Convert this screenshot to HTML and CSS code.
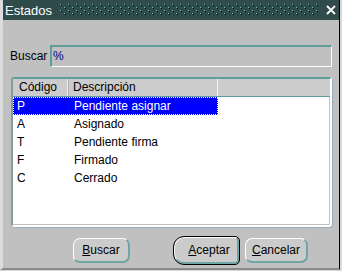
FILE: index.html
```html
<!DOCTYPE html>
<html lang="es">

<head>
    <meta charset="UTF-8">
    <title>Estados</title>
    <link rel="stylesheet" href="styles.css">
</head>

<body>
    <div class="window">
        <div class="titlebar">
            <span class="title">Estados</span>
            <svg class="grip" width="258" height="12">
                <defs>
                    <pattern id="dots" width="8" height="6" patternUnits="userSpaceOnUse">
                        <rect x="0" y="0" width="1" height="1" fill="#6fc1c1"/>
                        <rect x="1" y="1" width="1" height="1" fill="#000"/>
                        <rect x="4" y="3" width="1" height="1" fill="#6fc1c1"/>
                        <rect x="5" y="4" width="1" height="1" fill="#000"/>
                    </pattern>
                </defs>
                <rect width="258" height="12" fill="url(#dots)"/>
            </svg>
            <svg class="close" width="10" height="10" viewBox="0 0 10 10">
                <path d="M1 1 L9 9 M9 1 L1 9" stroke="#fff" stroke-width="1.8"/>
            </svg>
        </div>

        <div class="content">
            <div class="search">
                <label>Buscar</label>
                <div class="field">%</div>
            </div>

            <div class="list">
                <div class="row head">
                    <div class="col code">Código</div>
                    <div class="col desc">Descripción</div>
                </div>
                <div class="row selected">
                    <div class="col code">P</div>
                    <div class="col desc">Pendiente asignar</div>
                </div>
                <div class="row">
                    <div class="col code">A</div>
                    <div class="col desc">Asignado</div>
                </div>
                <div class="row">
                    <div class="col code">T</div>
                    <div class="col desc">Pendiente firma</div>
                </div>
                <div class="row">
                    <div class="col code">F</div>
                    <div class="col desc">Firmado</div>
                </div>
                <div class="row">
                    <div class="col code">C</div>
                    <div class="col desc">Cerrado</div>
                </div>
            </div>

            <div class="buttons">
                <button class="btn btn-find"><u>B</u>uscar</button>
                <button class="btn btn-ok"><u>A</u>ceptar</button>
                <button class="btn btn-cancel"><u>C</u>ancelar</button>
            </div>
        </div>
    </div>
</body>

</html>
```

FILE: styles.css
```css
body {
    margin: 0;
    background: #d8d8d8;
    font-family: "Liberation Sans", Arial, sans-serif;
    font-size: 12px;
}

.window {
    width: 340px;
    height: 270px;
    box-sizing: border-box;
    background: #c0c0c0;
    border-left: 3px solid #dcdcdc;
    border-right: 1px solid #000;
    border-bottom: 2px solid #8a8a8a;
}

.titlebar {
    height: 20px;
    background: #2f4b4b;
    display: flex;
    align-items: center;
    color: #fff;
}

.title {
    font-size: 13px;
    padding-left: 2px;
    width: 55px;
}

.grip {
    display: block;
}

.close {
    display: block;
    margin-left: 8px;
}

.content {
    padding: 25px 7px 0 7px;
}

.search {
    display: flex;
    align-items: center;
}

.search label {
    width: 40px;
}

.field {
    flex: 1;
    height: 22px;
    box-sizing: border-box;
    border-top: 2px solid #5f9e9e;
    border-left: 2px solid #5f9e9e;
    border-right: 1px solid #fff;
    border-bottom: 1px solid #fff;
    color: #000080;
    padding-left: 1px;
    line-height: 18px;
}

.list {
    margin: 10px 0 0 1px;
    height: 150px;
    box-sizing: border-box;
    background: #fff;
    border-top: 2px solid #5f9e9e;
    border-left: 2px solid #7fa0a0;
    border-right: 2px solid #fff;
    border-bottom: 2px solid #fff;
    border-radius: 3px;
    box-shadow: 1px 1px 0 #9ab, inset -1px -1px 0 #c0c0c0;
}

.row {
    display: flex;
    height: 18px;
    line-height: 18px;
}

.col {
    box-sizing: border-box;
    white-space: nowrap;
}

.code {
    width: 55px;
    padding-left: 4px;
}

.desc {
    width: 150px;
    padding-left: 6px;
}

.row.head {
    background: #cccccc;
    border-bottom: 1px solid #5f9e9e;
    height: 17px;
    line-height: 17px;
}

.head .code {
    padding-left: 6px;
    border-right: 1px solid #f0f0f0;
}

.head .desc {
    padding-left: 5px;
    border-right: 1px solid #f0f0f0;
    box-shadow: inset 1px 0 0 #b0b0b0;
}

.row.selected {
    width: 205px;
    background: #0000ff;
    color: #fff;
    outline: 1px dotted #fff;
    outline-offset: -1px;
}

.buttons {
    display: flex;
    align-items: center;
    margin-top: 10px;
    padding-left: 63px;
}

.btn {
    font-family: "Liberation Sans", Arial, sans-serif;
    font-size: 12px;
    height: 25px;
    background: #cbcbcb;
    color: #000;
    border-top: 1px solid #fff;
    border-left: 1px solid #fff;
    border-right: 2px solid #6fa5a5;
    border-bottom: 2px solid #6fa5a5;
    border-radius: 7px;
    padding: 0;
    margin: 0;
}

.btn-find {
    width: 57px;
}

.btn-ok {
    width: 65px;
    height: 27px;
    margin-left: 44px;
    border-radius: 10px 4px 4px 10px;
    outline: 1px solid #000;
    outline-offset: 0;
    border-color: #fff #6fa5a5 #6fa5a5 #fff;
    padding-left: 6px;
}

.btn-cancel {
    width: 63px;
    margin-left: 6px;
}
```
